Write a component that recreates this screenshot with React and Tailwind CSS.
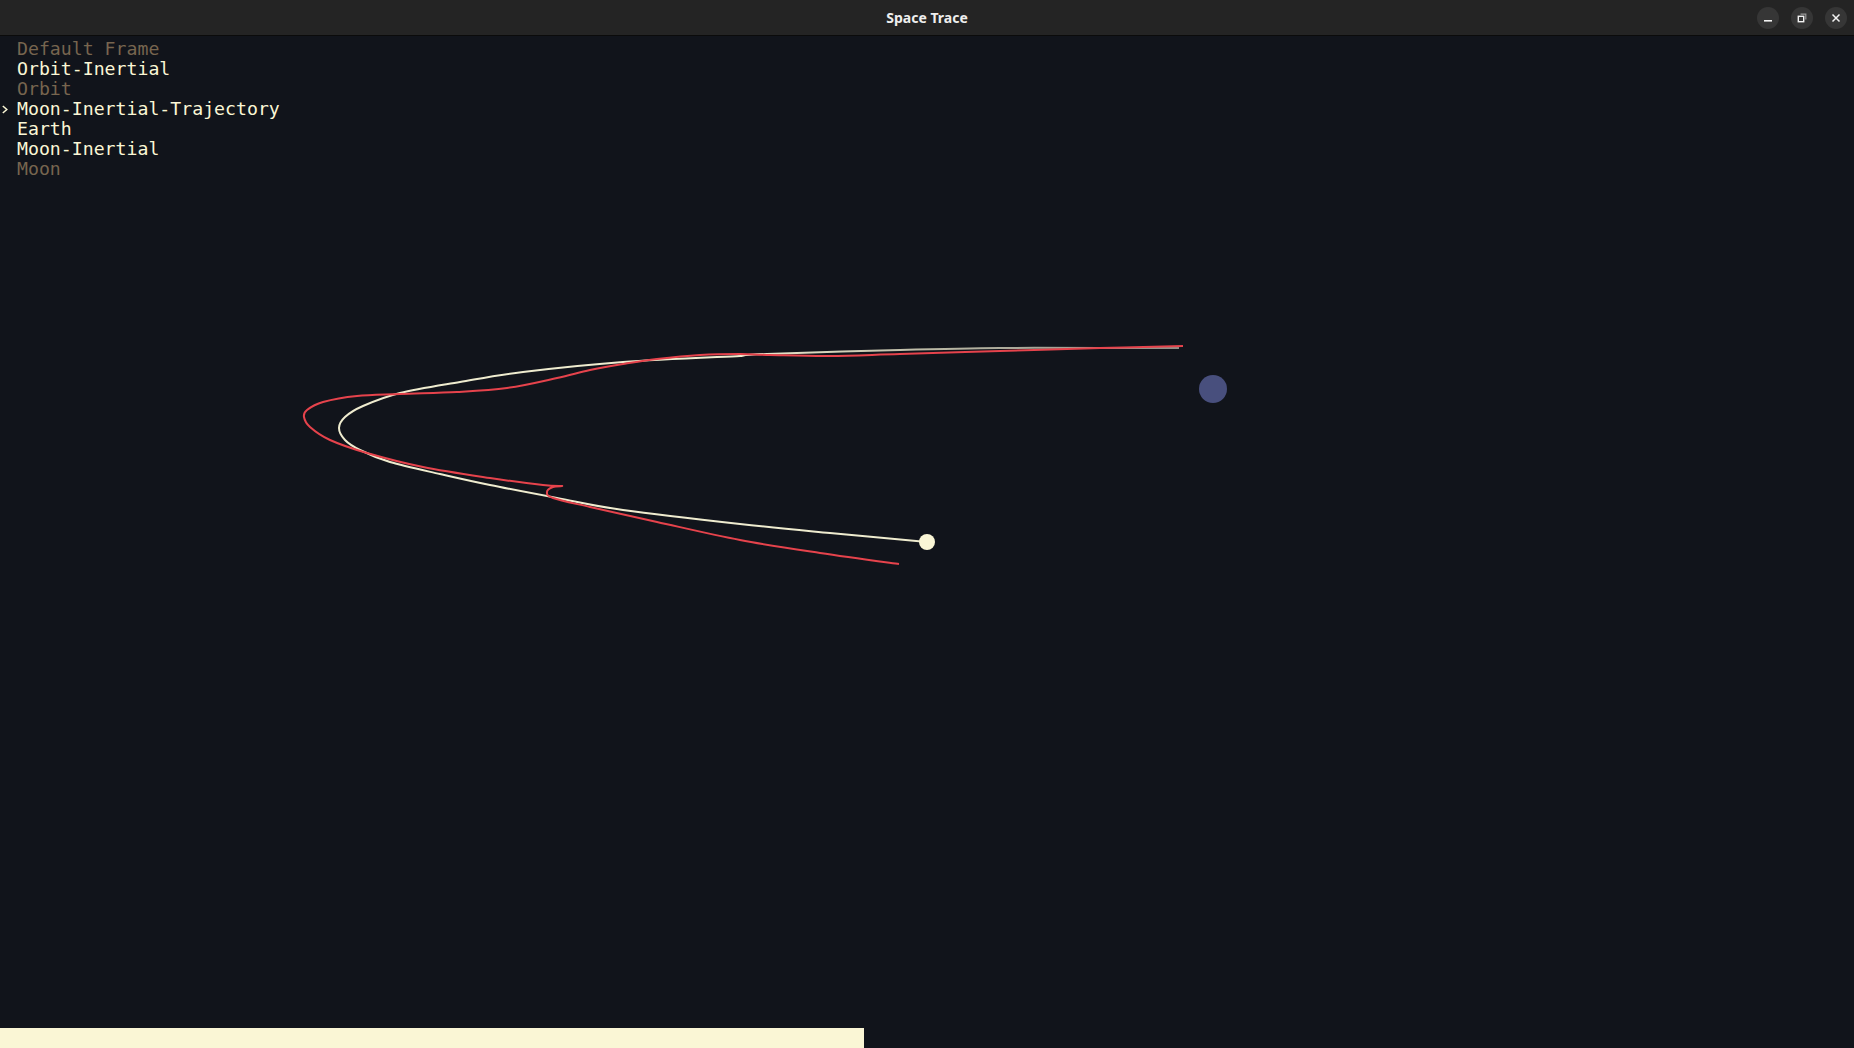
import React from "react";

const frames = [
  { name: "Default Frame", dim: true },
  { name: "Orbit-Inertial" },
  { name: "Orbit", dim: true },
  { name: "Moon-Inertial-Trajectory", selected: true },
  { name: "Earth" },
  { name: "Moon-Inertial" },
  { name: "Moon", dim: true },
];

const redPts = [
  [1183, 346], [1100, 348], [1000, 351], [900, 354], [830, 356], [770, 355], [740, 354], [700, 355],
  [657, 359], [623, 364], [590, 370], [557, 378], [507, 388], [457, 392], [400, 394], [357, 396],
  [323, 402], [307, 410], [304, 417], [310, 427], [330, 440], [367, 453], [423, 467], [490, 478],
  [543, 485], [562, 486], [553, 487], [547, 492], [553, 498], [590, 507], [657, 522], [740, 540],
  [820, 553], [899, 564],
];

const whitePts = [
  [1179, 348], [1100, 348], [1000, 348], [900, 350], [767, 354], [740, 356], [623, 362], [523, 372],
  [460, 382], [400, 393], [363, 406], [345, 417], [339, 428], [345, 440], [360, 450], [390, 462],
  [440, 474], [490, 485], [557, 498], [623, 510], [740, 524], [830, 533], [927, 542],
];

// catmull-rom -> cubic bezier
function smooth(pts) {
  let d = `M${pts[0][0]},${pts[0][1]}`;
  for (let i = 0; i < pts.length - 1; i++) {
    const p0 = pts[i - 1] || pts[i];
    const p1 = pts[i];
    const p2 = pts[i + 1];
    const p3 = pts[i + 2] || p2;
    const c1x = p1[0] + (p2[0] - p0[0]) / 6;
    const c1y = p1[1] + (p2[1] - p0[1]) / 6;
    const c2x = p2[0] - (p3[0] - p1[0]) / 6;
    const c2y = p2[1] - (p3[1] - p1[1]) / 6;
    d += ` C${c1x.toFixed(1)},${c1y.toFixed(1)} ${c2x.toFixed(1)},${c2y.toFixed(1)} ${p2[0]},${p2[1]}`;
  }
  return d;
}

function TitleButton({ children }) {
  return (
    <div className="w-[22px] h-[22px] rounded-full bg-[#363636] flex items-center justify-center">
      {children}
    </div>
  );
}

export default function App() {
  return (
    <div className="relative w-[1854px] h-[1048px] bg-[#11141b] overflow-hidden flex flex-col">
      <div className="h-9 shrink-0 bg-[#242424] border-b border-[#0b0b0b] flex items-center justify-center relative">
        <span className="text-[14px] font-bold text-[#eeeeee]" style={{ fontFamily: "'Noto Sans', 'Open Sans', sans-serif" }}>
          Space Trace
        </span>
        <div className="absolute right-[7px] top-[7px] flex gap-[12px]">
          <TitleButton>
            <svg width="10" height="10" viewBox="0 0 10 10">
              <rect x="1" y="7" width="8" height="1.6" fill="#f2f2f2" />
            </svg>
          </TitleButton>
          <TitleButton>
            <svg width="10" height="10" viewBox="0 0 10 10">
              <path d="M3.5 1.2H8.8V6.5" fill="none" stroke="#9a9a9a" strokeWidth="1.2" />
              <rect x="1.3" y="3.3" width="5.4" height="5.4" fill="none" stroke="#f2f2f2" strokeWidth="1.4" />
            </svg>
          </TitleButton>
          <TitleButton>
            <svg width="10" height="10" viewBox="0 0 10 10">
              <path d="M1.5 1.5L8.5 8.5M8.5 1.5L1.5 8.5" stroke="#f2f2f2" strokeWidth="1.5" />
            </svg>
          </TitleButton>
        </div>
      </div>

      <div className="flex-1 relative">
        <ul className="pt-[3px] pl-[17px]" style={{ fontFamily: "'DejaVu Sans Mono', 'Liberation Mono', monospace" }}>
          {frames.map((f) => (
            <li
              key={f.name}
              className={`relative h-5 leading-[20px] text-[18.2px] whitespace-pre ${f.dim ? "text-[#77654f]" : "text-[#fbf7d6]"}`}
            >
              {f.selected && (
                <svg className="absolute left-[-15px] top-[6px]" width="6" height="9" viewBox="0 0 6 9">
                  <path d="M0.8 1L4.8 4.5L0.8 8" fill="none" stroke="#fbf7d6" strokeWidth="1.5" />
                </svg>
              )}
              {f.name}
            </li>
          ))}
        </ul>
      </div>

      <div className="h-5 w-[864px] shrink-0 bg-[#faf6d5]" />

      <svg className="absolute inset-0 pointer-events-none" width="1854" height="1048" viewBox="0 0 1854 1048">
        <defs>
          <linearGradient id="fade" gradientUnits="userSpaceOnUse" x1="740" y1="0" x2="1180" y2="0">
            <stop offset="0" stopColor="#efeccf" />
            <stop offset="0.45" stopColor="#b9b7a4" />
            <stop offset="1" stopColor="#8e8d86" />
          </linearGradient>
        </defs>
        <path d={smooth(whitePts.slice(0, 6))} fill="none" stroke="url(#fade)" strokeWidth="2" />
        <path d={smooth(whitePts.slice(5))} fill="none" stroke="#efeccf" strokeWidth="2" />
        <path d={smooth(redPts)} fill="none" stroke="#e6434c" strokeWidth="2" strokeLinejoin="round" />
        <circle cx="927" cy="542" r="8" fill="#faf6d6" />
        <circle cx="1213" cy="389" r="14" fill="#484f7d" />
      </svg>
    </div>
  );
}
